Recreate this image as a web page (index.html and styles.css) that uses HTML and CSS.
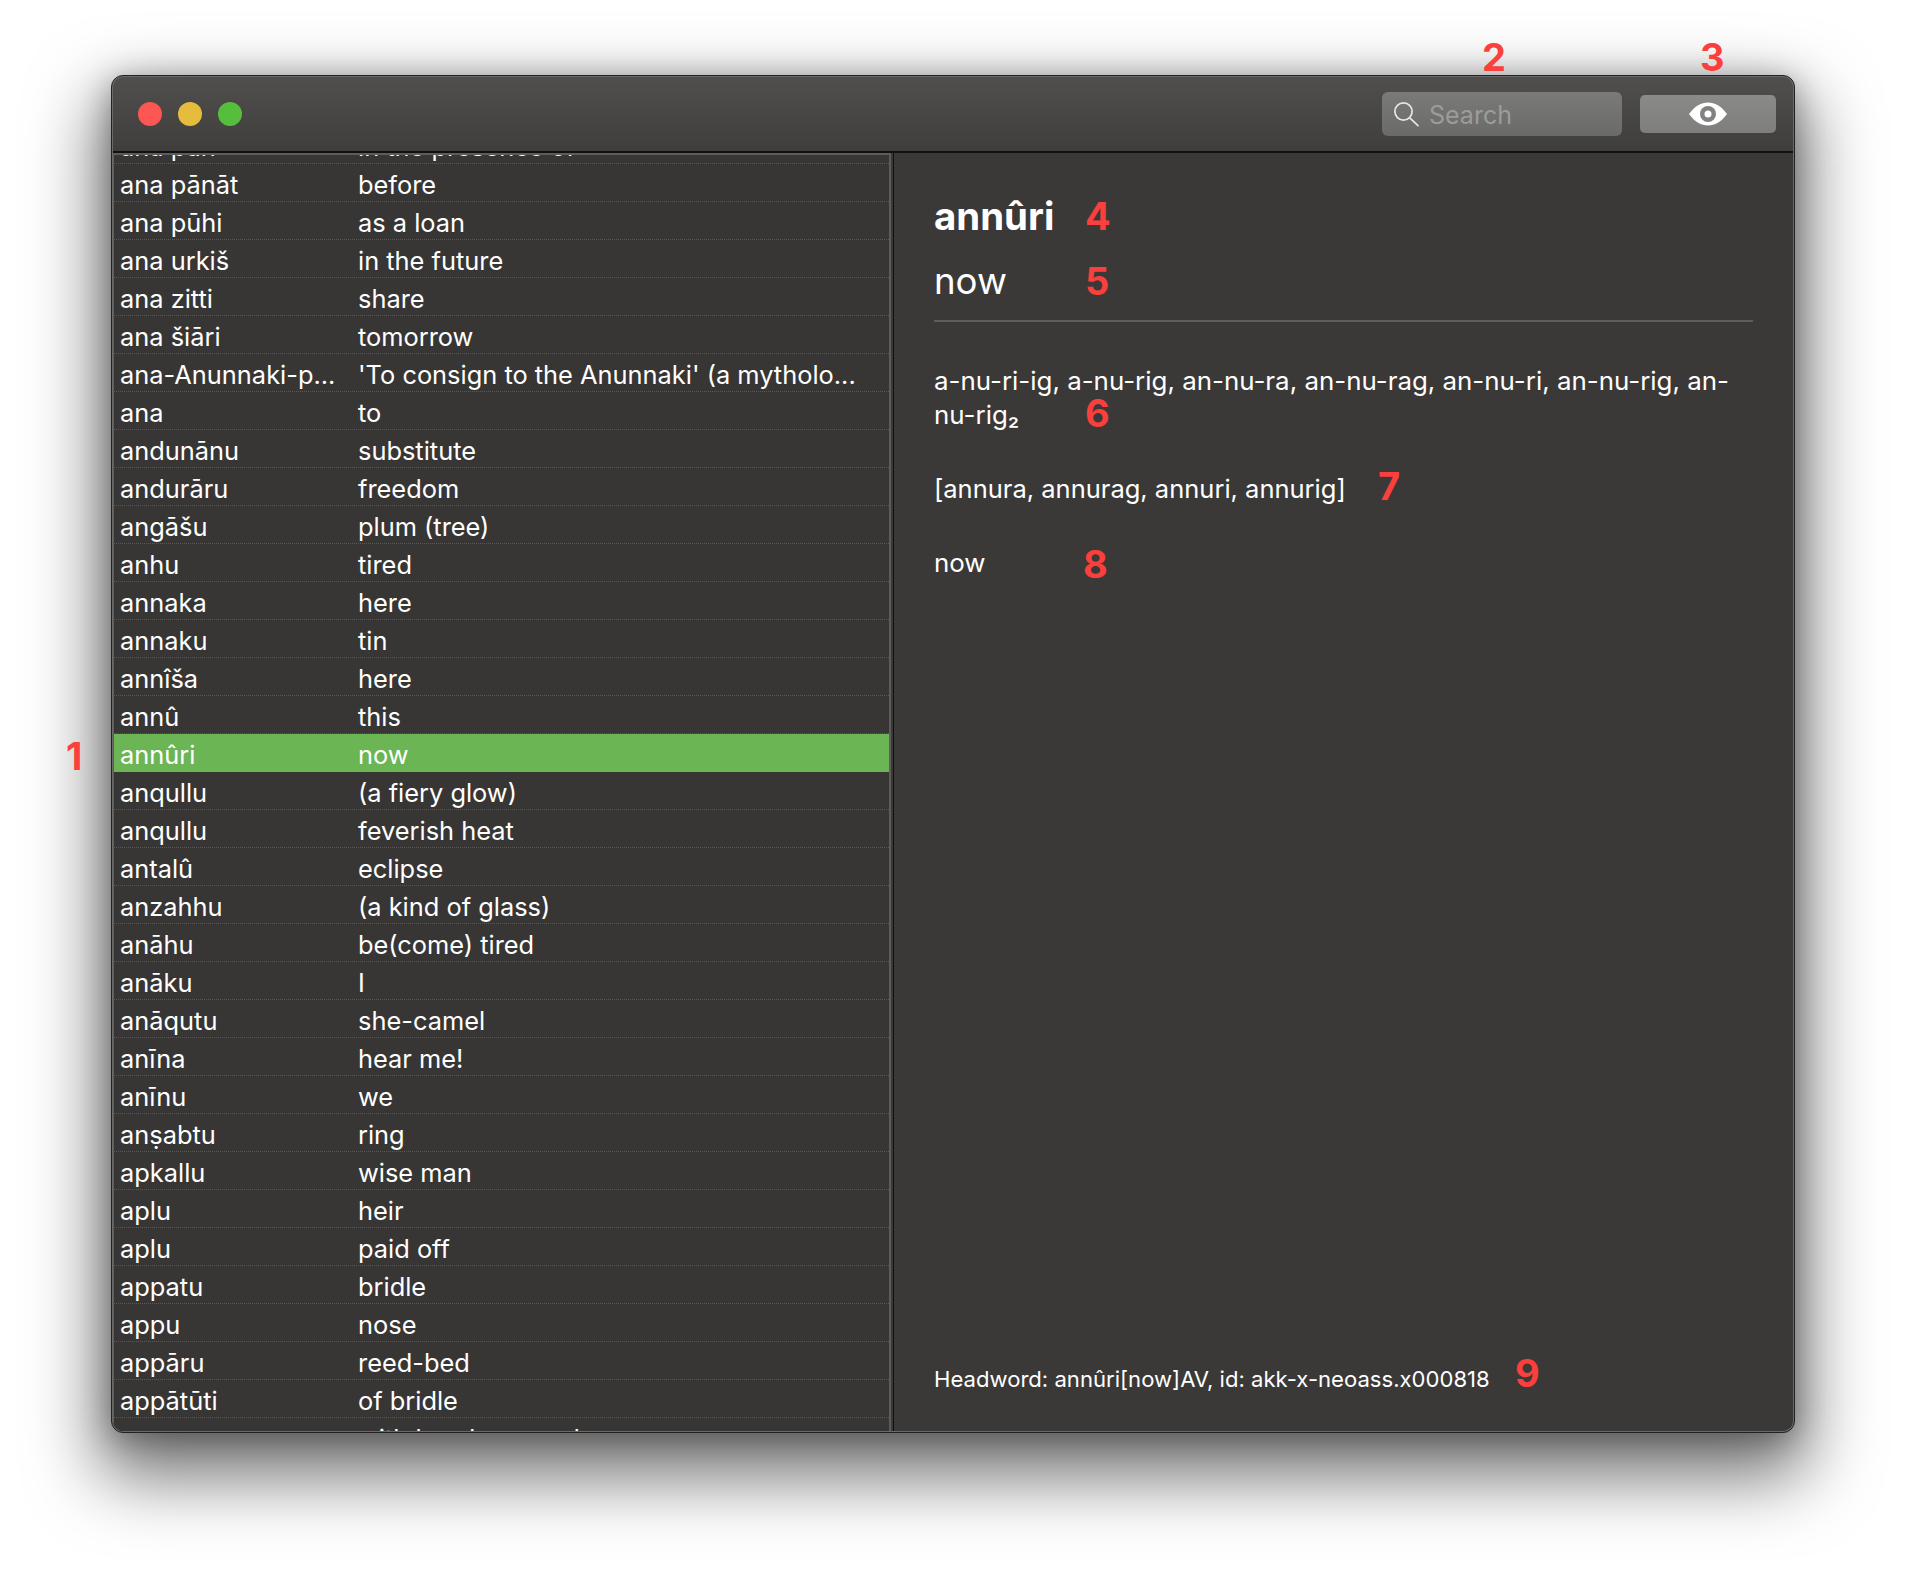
FILE: index.html
```html
<!DOCTYPE html>
<html lang="en">
<head>
<meta charset="utf-8">
<title>Akkadian dictionary</title>
<link rel="stylesheet" href="styles.css">
</head>
<body>
<div class="stage">
  <div class="window">
    <header class="titlebar">
      <div class="lights">
        <span class="light red"></span>
        <span class="light yellow"></span>
        <span class="light green"></span>
      </div>
      <div class="search">
        <svg class="search-icon" viewBox="0 0 26 26" width="26" height="26" fill="none" stroke="#e6e6e6" stroke-width="1.7" stroke-linecap="round"><circle cx="10.5" cy="10.5" r="8.6"/><path d="M16.8 16.8 L25 24.6"/></svg>
        <span class="search-text">Search</span>
      </div>
      <button class="eye-btn" type="button">
        <svg viewBox="0 0 38 24" width="38" height="24"><path d="M0 12 C6 4 12 0.5 19 0.5 C26 0.5 32 4 38 12 C32 20 26 23.5 19 23.5 C12 23.5 6 20 0 12 Z" fill="#fff"/><circle cx="19" cy="12" r="8" fill="#828280"/><circle cx="19" cy="12" r="3.5" fill="#fff"/></svg>
      </button>
    </header>
    <main class="content">
      <section class="list">
        <div class="rows">
          <div class="row"><span class="c1">ana pān</span><span class="c2">in the presence of</span></div>
          <div class="row"><span class="c1">ana pānāt</span><span class="c2">before</span></div>
          <div class="row"><span class="c1">ana pūhi</span><span class="c2">as a loan</span></div>
          <div class="row"><span class="c1">ana urkiš</span><span class="c2">in the future</span></div>
          <div class="row"><span class="c1">ana zitti</span><span class="c2">share</span></div>
          <div class="row"><span class="c1">ana šiāri</span><span class="c2">tomorrow</span></div>
          <div class="row"><span class="c1">ana-Anunnaki-p...</span><span class="c2">'To consign to the Anunnaki' (a mytholo...</span></div>
          <div class="row"><span class="c1">ana</span><span class="c2">to</span></div>
          <div class="row"><span class="c1">andunānu</span><span class="c2">substitute</span></div>
          <div class="row"><span class="c1">andurāru</span><span class="c2">freedom</span></div>
          <div class="row"><span class="c1">angāšu</span><span class="c2">plum (tree)</span></div>
          <div class="row"><span class="c1">anhu</span><span class="c2">tired</span></div>
          <div class="row"><span class="c1">annaka</span><span class="c2">here</span></div>
          <div class="row"><span class="c1">annaku</span><span class="c2">tin</span></div>
          <div class="row"><span class="c1">annîša</span><span class="c2">here</span></div>
          <div class="row"><span class="c1">annû</span><span class="c2">this</span></div>
          <div class="row selected"><span class="c1">annûri</span><span class="c2">now</span></div>
          <div class="row"><span class="c1">anqullu</span><span class="c2">(a fiery glow)</span></div>
          <div class="row"><span class="c1">anqullu</span><span class="c2">feverish heat</span></div>
          <div class="row"><span class="c1">antalû</span><span class="c2">eclipse</span></div>
          <div class="row"><span class="c1">anzahhu</span><span class="c2">(a kind of glass)</span></div>
          <div class="row"><span class="c1">anāhu</span><span class="c2">be(come) tired</span></div>
          <div class="row"><span class="c1">anāku</span><span class="c2">I</span></div>
          <div class="row"><span class="c1">anāqutu</span><span class="c2">she-camel</span></div>
          <div class="row"><span class="c1">anīna</span><span class="c2">hear me!</span></div>
          <div class="row"><span class="c1">anīnu</span><span class="c2">we</span></div>
          <div class="row"><span class="c1">anṣabtu</span><span class="c2">ring</span></div>
          <div class="row"><span class="c1">apkallu</span><span class="c2">wise man</span></div>
          <div class="row"><span class="c1">aplu</span><span class="c2">heir</span></div>
          <div class="row"><span class="c1">aplu</span><span class="c2">paid off</span></div>
          <div class="row"><span class="c1">appatu</span><span class="c2">bridle</span></div>
          <div class="row"><span class="c1">appu</span><span class="c2">nose</span></div>
          <div class="row"><span class="c1">appāru</span><span class="c2">reed-bed</span></div>
          <div class="row"><span class="c1">appātūti</span><span class="c2">of bridle</span></div>
          <div class="row"><span class="c1">apparru</span><span class="c2">with head covered</span></div>
        </div>
      </section>
      <section class="detail">
        <h1 class="headword">annûri</h1>
        <h2 class="gloss">now</h2>
        <hr class="rule">
        <p class="forms">a-nu-ri-ig, a-nu-rig, an-nu-ra, an-nu-rag, an-nu-ri, an-nu-rig, an-nu-rig₂</p>
        <p class="norms">[annura, annurag, annuri, annurig]</p>
        <p class="sense">now</p>
        <p class="meta">Headword: annûri[now]AV, id: akk-x-neoass.x000818</p>
      </section>
    </main>
  </div>
  <span class="mark m1">1</span>
  <span class="mark m2">2</span>
  <span class="mark m3">3</span>
  <span class="mark m4">4</span>
  <span class="mark m5">5</span>
  <span class="mark m6">6</span>
  <span class="mark m7">7</span>
  <span class="mark m8">8</span>
  <span class="mark m9">9</span>
</div>
</body>
</html>
```
FILE: styles.css
```css
* { box-sizing: border-box; }
html, body { margin: 0; padding: 0; background: #fff; }
body { font-family: Inter, "Noto Sans", sans-serif; color: #fff; }
.stage { position: relative; width: 1906px; height: 1580px; padding: 75px 111px 0 111px; overflow: hidden; }
.window {
  width: 1684px; height: 1358px; display: flex; flex-direction: column; padding: 1px;
  background: #6a6a68; border: 1px solid #222; border-radius: 12px; overflow: hidden;
  box-shadow: 0 32px 70px 12px rgba(0,0,0,.55), 0 5px 30px rgba(0,0,0,.3);
  position: relative;
}
.titlebar {
  height: 76px; flex: none; display: flex; align-items: center; padding: 0 17px 0 25px;
  background: linear-gradient(#504f4d, #3f3e3c); border-bottom: 2px solid #111;
  border-radius: 10px 10px 0 0;
}
.lights { display: flex; gap: 16px; margin-right: auto; }
.light { width: 24px; height: 24px; border-radius: 50%; }
.red { background: #fc5753; }
.yellow { background: #e5bc3b; }
.green { background: #55bf3d; }
.search {
  width: 240px; height: 44px; display: flex; align-items: center; gap: 10px; padding-left: 11px;
  background: linear-gradient(#7a7a78, #6a6a68); border-radius: 6px; margin-right: 18px;
}
.search-text { font-size: 25px; color: #9c9c9a; position: relative; top: 1px; }
.eye-btn {
  width: 136px; height: 38px; margin: 0; padding: 0; border: 0; border-radius: 5px;
  background: linear-gradient(#8a8a88, #7e7e7c); display: flex; align-items: center; justify-content: center;
}
.content { flex: 1; display: flex; min-height: 0; background: #3a3937; border-radius: 0 0 10px 10px; overflow: hidden; }
.list {
  width: 778px; flex: none; overflow: hidden; background: #373634;
  border-style: solid; border-color: #5c5c5a; border-width: 2px 2px 0 1px;
  box-shadow: 2px 0 0 #3a3937, 3px 0 0 #111;
}
.rows { margin-top: -29px; }
.row {
  height: 38px; display: flex; align-items: center; padding: 4px 0 0 6px; font-size: 25.4px; line-height: 34px;
  border-bottom: 1px dotted #5a5958; white-space: nowrap;
}
.row.selected { background: #6bb554; border-bottom-color: #6bb554; }
.c1 { width: 238px; flex: none; }
.detail { flex: 1; position: relative; padding: 39px 40px 0 43px; display: flex; flex-direction: column; }
.headword { margin: 0; font-size: 38.4px; line-height: 48px; font-weight: 700; }
.gloss { margin: 17px 0 0; font-size: 36.6px; line-height: 48px; font-weight: 400; }
.rule { width: 100%; margin: 15px 0 0; border: 0; height: 2px; background: #5e5d5b; }
.forms { margin: 42px 0 0; font-size: 25.9px; line-height: 34px; }
.norms { margin: 40px 0 0; font-size: 25.5px; line-height: 34px; }
.sense { margin: 40px 0 0; font-size: 25.9px; line-height: 34px; }
.meta { margin: auto 0 37px; font-size: 22.1px; line-height: 30px; }
.mark { position: absolute; font-family: Inter, sans-serif; font-weight: 700; color: #fb3f3c; font-size: 38px; line-height: 46px; }
.m1 { left: 66px; top: 733px; }
.m2 { left: 1482px; top: 34px; }
.m3 { left: 1700px; top: 34px; }
.m4 { left: 1085px; top: 193px; }
.m5 { left: 1085px; top: 258px; }
.m6 { left: 1085px; top: 390px; }
.m7 { left: 1378px; top: 463px; }
.m8 { left: 1083px; top: 541px; }
.m9 { left: 1515px; top: 1350px; }
```
